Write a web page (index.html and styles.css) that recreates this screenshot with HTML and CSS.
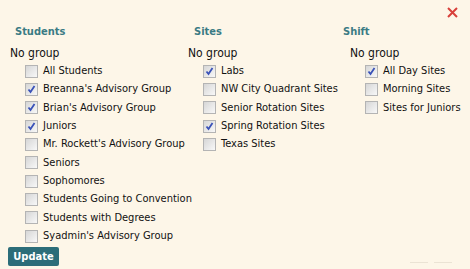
FILE: index.html
```html
<!DOCTYPE html>
<html lang="en">

<head>
    <meta charset="UTF-8">
    <title>Group Filter</title>
    <link rel="stylesheet" href="styles.css">
</head>

<body>

    <div class="panel">
        <!-- Close button -->
        <a class="close" href="#" title="Close">
            <svg width="11" height="11" viewBox="0 0 11 11">
                <path d="M1 1 L10 10 M10 1 L1 10" stroke="#d8403a" stroke-width="2" fill="none" />
            </svg>
        </a>

        <div class="columns">
            <!-- Students -->
            <div class="col col-students">
                <h4>Students</h4>
                <div class="group">No group</div>
                <ul>
                    <li><span class="box"></span>All Students</li>
                    <li><span class="box checked"><svg viewBox="0 0 11 11"><path d="M2.5 5.5 L4.5 8 L8.5 2" /></svg></span>Breanna's Advisory Group</li>
                    <li><span class="box checked"><svg viewBox="0 0 11 11"><path d="M2.5 5.5 L4.5 8 L8.5 2" /></svg></span>Brian's Advisory Group</li>
                    <li><span class="box checked"><svg viewBox="0 0 11 11"><path d="M2.5 5.5 L4.5 8 L8.5 2" /></svg></span>Juniors</li>
                    <li><span class="box"></span>Mr. Rockett's Advisory Group</li>
                    <li><span class="box"></span>Seniors</li>
                    <li><span class="box"></span>Sophomores</li>
                    <li><span class="box"></span>Students Going to Convention</li>
                    <li><span class="box"></span>Students with Degrees</li>
                    <li><span class="box"></span>Syadmin's Advisory Group</li>
                </ul>
            </div>

            <!-- Sites -->
            <div class="col col-sites">
                <h4>Sites</h4>
                <div class="group">No group</div>
                <ul>
                    <li><span class="box checked"><svg viewBox="0 0 11 11"><path d="M2.5 5.5 L4.5 8 L8.5 2" /></svg></span>Labs</li>
                    <li><span class="box"></span>NW City Quadrant Sites</li>
                    <li><span class="box"></span>Senior Rotation Sites</li>
                    <li><span class="box checked"><svg viewBox="0 0 11 11"><path d="M2.5 5.5 L4.5 8 L8.5 2" /></svg></span>Spring Rotation Sites</li>
                    <li><span class="box"></span>Texas Sites</li>
                </ul>
            </div>

            <!-- Shift -->
            <div class="col col-shift">
                <h4>Shift</h4>
                <div class="group">No group</div>
                <ul>
                    <li><span class="box checked"><svg viewBox="0 0 11 11"><path d="M2.5 5.5 L4.5 8 L8.5 2" /></svg></span>All Day Sites</li>
                    <li><span class="box"></span>Morning Sites</li>
                    <li><span class="box"></span>Sites for Juniors</li>
                </ul>
            </div>
        </div>

        <div class="footer">
            <button type="button">Update</button>
            <span class="faint"><i></i><i></i></span>
        </div>
    </div>

</body>

</html>
```

FILE: styles.css
```css
body {
    font-family: "DejaVu Sans Condensed", "DejaVu Sans", sans-serif;
    margin: 0;
    padding: 0;
    background-color: #fdf6e8;
    color: #111;
}

.panel {
    position: relative;
    width: 470px;
    height: 269px;
    padding-top: 25px;
    box-sizing: border-box;
}

.close {
    position: absolute;
    top: 7px;
    left: 447px;
    line-height: 0;
}

.columns {
    display: flex;
}

.col h4 {
    margin: 0 0 6px 0;
    font-size: 11px;
    line-height: 14px;
    color: #3b7b84;
}

.col-students {
    width: 178px;
    padding-left: 10px;
}

.col-students h4 {
    margin-left: 5px;
}

.col-sites {
    width: 155px;
    padding-left: 0;
}

.col-sites h4 {
    margin-left: 6px;
}

.col-shift {
    padding-left: 7px;
}

.col-shift h4 {
    margin-left: -7px;
}

.group {
    font-size: 12px;
    line-height: 16px;
}

ul {
    list-style: none;
    margin: 0;
    padding: 1px 0 0 15px;
}

li {
    display: flex;
    align-items: center;
    font-size: 11px;
    line-height: 18.33px;
    height: 18.33px;
    white-space: nowrap;
}

.box {
    width: 11px;
    height: 11px;
    margin-right: 5px;
    border: 1px solid #b4b4b4;
    background: linear-gradient(135deg, #d6d6d6, #f8f8f8);
    flex: none;
    line-height: 0;
}

.box svg {
    width: 11px;
    height: 11px;
}

.box svg path {
    fill: none;
    stroke: #3a52b8;
    stroke-width: 1.8;
}

.footer {
    display: flex;
    align-items: center;
    justify-content: space-between;
    padding: 2px 0 0 8px;
}

button {
    font-family: "DejaVu Sans Condensed", "DejaVu Sans", sans-serif;
    font-size: 11px;
    font-weight: bold;
    height: 19px;
    width: 51px;
    padding: 0;
    color: #fff;
    background-color: #2c6d79;
    border: none;
    border-radius: 2px;
    cursor: pointer;
}

.faint {
    display: flex;
    gap: 6px;
    margin: 12px 18px 0 0;
}

.faint i {
    display: block;
    width: 18px;
    height: 1px;
    background-color: #ebe3d4;
}
```
